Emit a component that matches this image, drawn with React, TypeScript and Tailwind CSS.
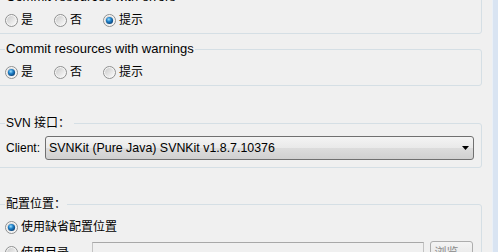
import React from "react";

function Radio({ checked }: { checked?: boolean }) {
  return (
    <svg width="13" height="13" viewBox="0 0 13 13" className="shrink-0">
      <defs>
        <linearGradient id="rb-fill" x1="0" y1="0" x2="1" y2="1">
          <stop offset="0" stopColor="#cbcbcb" />
          <stop offset="1" stopColor="#fbfbfb" />
        </linearGradient>
        <radialGradient id="rb-dot" cx="0.4" cy="0.35" r="0.7">
          <stop offset="0" stopColor="#9be0ff" />
          <stop offset="0.45" stopColor="#1f80c8" />
          <stop offset="1" stopColor="#083c70" />
        </radialGradient>
      </defs>
      <circle cx="6.5" cy="6.5" r="6" fill="#f6f6f6" stroke="#8e8f8f" />
      <circle cx="6.5" cy="6.5" r="4.5" fill="url(#rb-fill)" />
      {checked && <circle cx="6.5" cy="6.5" r="3.6" fill="url(#rb-dot)" />}
    </svg>
  );
}

function Option({ label, checked, w = "w-[49px]" }: { label: string; checked?: boolean; w?: string }) {
  return (
    <div className={`flex items-center gap-[3px] ${w}`}>
      <Radio checked={checked} />
      <span className="leading-[16px]">{label}</span>
    </div>
  );
}

function Group({
  title,
  className,
  titleClass = "",
  children,
}: {
  title: string;
  className: string;
  titleClass?: string;
  children: React.ReactNode;
}) {
  return (
    <fieldset className={`-ml-[4px] mr-[10px] rounded-[3px] border border-[#d5dfe5] px-[8px] ${className}`}>
      <legend className={`px-[1px] leading-[16px] ${titleClass}`}>{title}</legend>
      {children}
    </fieldset>
  );
}

export default function App() {
  return (
    <div className="flex h-[252px] w-[498px] overflow-hidden bg-[#f0f0f0] font-['Liberation_Sans','Noto_Sans_CJK_SC',sans-serif] text-[12px] text-black">
      <div className="flex-1">
        {/* errors */}
        <Group
          title="Commit resources with errors"
          titleClass="text-[13px]"
          className="-mt-[11px] h-[45px] pt-[7px]"
        >
          <div className="flex items-center">
            <Option label="是" />
            <Option label="否" />
            <Option label="提示" checked />
          </div>
        </Group>

        {/* warnings */}
        <Group
          title="Commit resources with warnings"
          titleClass="text-[13px]"
          className="mt-[7px] h-[45px] pt-[7px]"
        >
          <div className="flex items-center">
            <Option label="是" checked />
            <Option label="否" />
            <Option label="提示" />
          </div>
        </Group>

        {/* SVN interface */}
        <Group title="SVN 接口：" titleClass="pr-[4px]" className="mt-[29px] h-[53px] pt-[5px] pr-[7px]">
          <div className="flex h-[24px] items-center">
            <span className="w-[40px] pl-[1px]">Client:</span>
            <div className="flex h-[24px] flex-1 items-center justify-between rounded-[3px] border border-[#707070] bg-[linear-gradient(#f4f4f4,#e9e9e9_50%,#dcdcdc_52%,#d0d0d0)] pl-[3px] pr-[4px]">
              <span className="text-[12.4px]">SVNKit (Pure Java) SVNKit v1.8.7.10376</span>
              <svg width="7" height="4" viewBox="0 0 7 4">
                <polygon points="0,0 7,0 3.5,4" fill="#000" />
              </svg>
            </div>
          </div>
        </Group>

        {/* config location */}
        <Group title="配置位置：" className="mt-[28px] h-[80px] pt-[7px]">
          <Option label="使用缺省配置位置" checked w="w-auto" />
          <div className="mt-[6px] flex h-[23px] items-center">
            <Option label="使用目录" w="w-[87px]" />
            <div className="h-[21px] w-[332px] border border-[#c3c3c3] border-t-[#a8a8a8] bg-[#f0f0f0]" />
            <div className="ml-[6px] flex h-[23px] w-[43px] items-center justify-center rounded-[3px] border border-[#adadad] bg-[linear-gradient(#f4f4f4,#e3e3e3)] text-[#8a8a8a]">
              浏览...
            </div>
          </div>
        </Group>
      </div>
      <div className="w-[7px] border-l border-[#eaf0f7] bg-[#d9e4f2]" />
    </div>
  );
}
